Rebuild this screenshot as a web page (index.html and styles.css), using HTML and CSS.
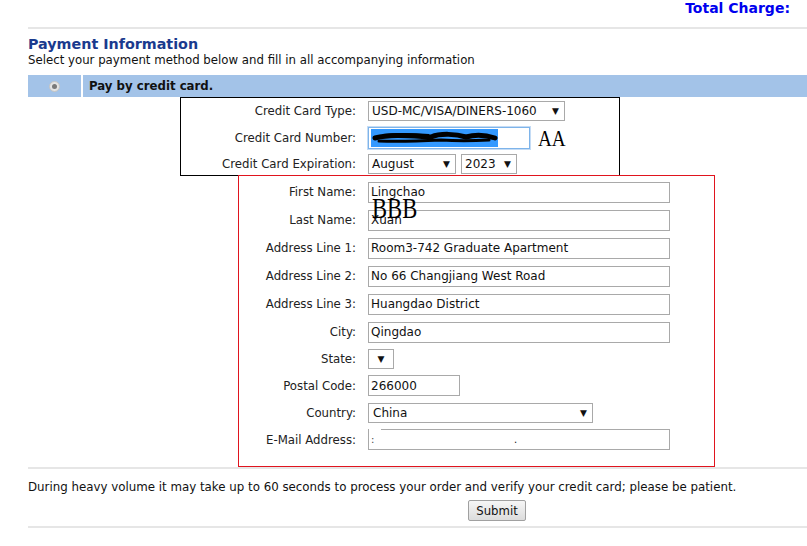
FILE: index.html
```html
<!DOCTYPE html>
<html>
<head>
<meta charset="utf-8">
<link rel="stylesheet" href="styles.css">
</head>
<body>
<div class="top"><span class="total">Total Charge:</span></div>
<div class="main">
  <h2 class="title">Payment Information</h2>
  <div class="subtitle">Select your payment method below and fill in all accompanying information</div>
  <div class="bar">
    <div class="radio-cell"><span class="radio"></span></div>
    <div class="bar-label">Pay by credit card.</div>
  </div>
  <div class="card-box">
    <div class="lbl">Credit Card Type:</div>
    <div class="ctl"><span class="select w-type">USD-MC/VISA/DINERS-1060<span class="arr">▼</span></span></div>
    <div class="lbl">Credit Card Number:</div>
    <div class="ctl">
      <span class="input focused w-num"><span class="sel"><svg width="127" height="18" viewBox="0 0 127 18"><path d="M4 9 C20 5 40 7 60 8 C70 4 85 5 95 8 C105 5 115 6 124 9" stroke="#000" stroke-width="5" fill="none" stroke-linecap="round"/><path d="M8 12 C30 13 50 12 70 11 C85 12 100 12 118 11" stroke="#000" stroke-width="3" fill="none" stroke-linecap="round"/><path d="M12 6 C30 4 45 5 58 6" stroke="#000" stroke-width="2" fill="none"/></svg></span></span>
      <span class="aa">AA</span>
    </div>
    <div class="lbl">Credit Card Expiration:</div>
    <div class="ctl"><span class="select w-month">August<span class="arr">▼</span></span><span class="select w-year">2023<span class="arr">▼</span></span></div>
  </div>
  <div class="addr-box">
    <div class="lbl">First Name:</div><div class="ctl"><span class="input w-full">Lingchao</span><span class="bbb">BBB</span></div>
    <div class="lbl">Last Name:</div><div class="ctl"><span class="input w-full">Xuan</span></div>
    <div class="lbl">Address Line 1:</div><div class="ctl"><span class="input w-full">Room3-742 Graduate Apartment</span></div>
    <div class="lbl">Address Line 2:</div><div class="ctl"><span class="input w-full">No 66 Changjiang West Road</span></div>
    <div class="lbl">Address Line 3:</div><div class="ctl"><span class="input w-full">Huangdao District</span></div>
    <div class="lbl">City:</div><div class="ctl"><span class="input w-full">Qingdao</span></div>
    <div class="lbl">State:</div><div class="ctl"><span class="select w-state"><span class="arr">▼</span></span></div>
    <div class="lbl">Postal Code:</div><div class="ctl"><span class="input w-postal">266000</span></div>
    <div class="lbl">Country:</div><div class="ctl"><span class="select w-country">China<span class="arr">▼</span></span></div>
    <div class="lbl">E-Mail Address:</div><div class="ctl"><span class="input w-full email"><span class="colon">:</span><span class="dot">.</span></span></div>
  </div>
  <div class="footer">
    <div class="note">During heavy volume it may take up to 60 seconds to process your order and verify your credit card; please be patient.</div>
    <div class="submit-row"><button class="submit">Submit</button></div>
  </div>
</div>
</body>
</html>
```
FILE: styles.css
```css
html, body { margin: 0; padding: 0; background: #fff; }
body { font-family: "DejaVu Sans", Verdana, sans-serif; font-size: 11.75px; color: #111; }

.top { height: 27px; text-align: right; padding-right: 17px; }
.total { font-weight: bold; font-size: 14px; color: #0000ee; line-height: 17px; display: inline-block; }

.main { margin-left: 28px; border-top: 2px solid #e6e6e6; }
.title { margin: 7px 0 0 0; font-size: 14.3px; font-weight: bold; color: #1a3a8e; line-height: 16px; }
.subtitle { line-height: 15px; color: #111; margin-top: 1px; }

.bar { margin-top: 7px; height: 22px; background: #a3c3e8; display: flex; align-items: center; }
.radio-cell { width: 53px; height: 22px; border-right: 2px solid #fff; display: flex; align-items: center; justify-content: center; }
.radio { width: 9px; height: 9px; border-radius: 50%; background: #e4e4e4; border: 1px solid #c4c4c4; position: relative; }
.radio::after { content: ""; position: absolute; left: 2px; top: 2px; width: 5px; height: 5px; border-radius: 50%; background: #7a7a7a; }
.bar-label { font-weight: bold; padding-left: 6px; color: #111; }

.card-box { margin-left: 152px; width: 438px; height: 77px; border: 1px solid #000; display: grid; grid-template-columns: 175px 1fr; column-gap: 12px; grid-template-rows: 26px 27px 26px; align-items: center; }
.lbl { text-align: right; color: #222; white-space: nowrap; }
.ctl { display: flex; align-items: center; gap: 5px; position: relative; font-size: 12px; }

.select { display: inline-flex; align-items: center; justify-content: space-between; height: 18px; border: 1px solid #a9a9a9; padding: 0 5px 0 3px; background: #fff; color: #111; white-space: nowrap; }
.arr { font-size: 9px; margin-left: 6px; }
.w-type { width: 187px; }
.w-month { width: 78px; }
.w-year { width: 46px; }
.w-state { width: 16px; padding: 0 4px; justify-content: center; }
.w-state .arr { margin-left: 0; }
.w-country { width: 214px; padding-left: 4px; }

.input { display: inline-flex; align-items: center; height: 19px; border: 1px solid #a9a9a9; padding: 0 2px; background: #fff; color: #111; white-space: nowrap; }
.w-full { width: 296px; }
.w-postal { width: 86px; }
.w-num { width: 156px; height: 20px; border: 1px solid #7eb4ea; box-shadow: 0 0 0 1px #c5dcf5; }
.sel { display: inline-block; background: #3399ff; width: 127px; height: 18px; }
.sel svg { display: block; }
.aa { display: inline-block; font-family: "Liberation Serif", "Times New Roman", serif; font-size: 24px; line-height: 24px; margin-left: 3px; color: #000; transform: scaleX(0.8); transform-origin: left center; }

.addr-box { margin-left: 210px; margin-top: -1px; width: 475px; border: 1px solid #e0141e; padding: 2px 0 13px 0; display: grid; grid-template-columns: 117px 1fr; column-gap: 12px; grid-template-rows: 28px 28px 28px 28px 28px 28px 26px 27px 27px 27px; align-items: center; }
.bbb { position: absolute; z-index: 2; left: 4px; top: 12px; font-family: "Liberation Serif", "Times New Roman", serif; font-size: 29px; line-height: 29px; color: #000; transform: scaleX(0.78); transform-origin: left top; }
.email { position: relative; }
.email::before { content: ""; position: absolute; top: -1px; left: 0; width: 12px; height: 1px; background: #fff; }
.colon { font-size: 10px; color: #444; }
.dot { position: absolute; left: 145px; top: 4px; font-size: 10px; }

.footer { border-top: 2px solid #e6e6e6; border-bottom: 2px solid #e6e6e6; padding: 10px 0 5px 0; }
.note { font-family: "DejaVu Sans Condensed", "DejaVu Sans", sans-serif; font-size: 13.15px; line-height: 16px; color: #111; }
.submit-row { padding-left: 440px; margin-top: 5px; }
.submit { font-family: "DejaVu Sans Condensed", "DejaVu Sans", sans-serif; font-size: 13px; height: 21px; width: 58px; padding: 0; border: 1px solid #a0a0a0; border-radius: 2px; background: linear-gradient(#f6f6f6, #dcdcdc); color: #111; }
```
